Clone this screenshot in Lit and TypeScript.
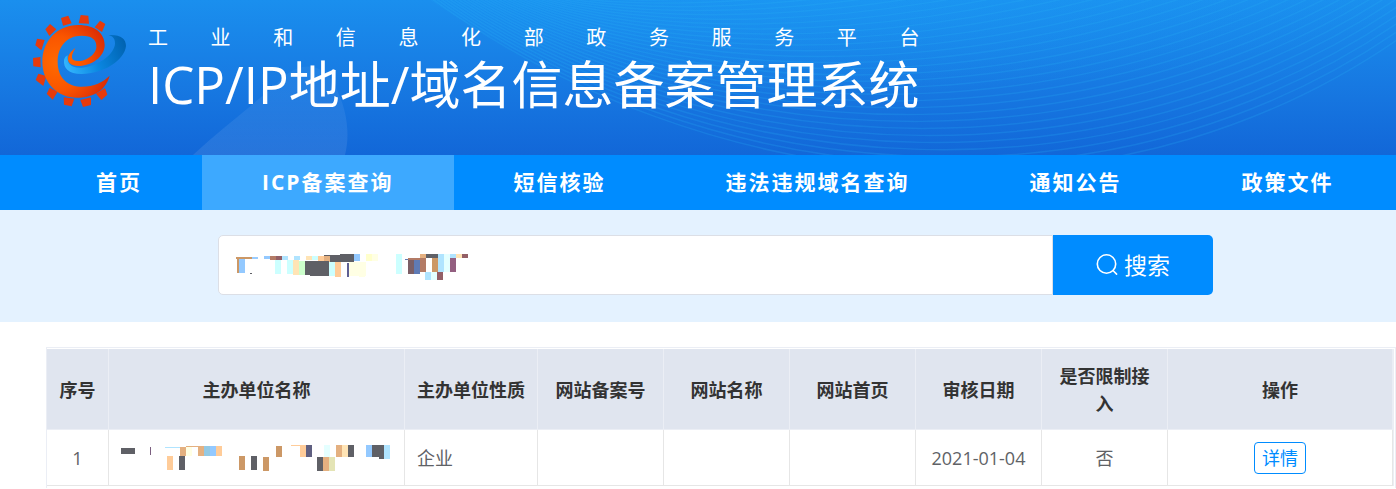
import { LitElement, html, svg, css } from "lit";
import { customElement } from "lit/decorators.js";

type Block = [number, number, number, number, string];

const QUERY_BLOCKS: Block[] = [
  [236, 257, 16, 2, "#cc9866"], [252, 257, 6, 2, "#99ccff"], [237, 259, 2, 14, "#cc9866"], [239, 259, 6, 14, "#93c9ff"],
  [250, 273, 2, 1, "#5f6066"], [264, 256, 6, 3, "#93c9ff"], [270, 256, 6, 4, "#b37b66"], [276, 256, 6, 4, "#935f66"],
  [282, 256, 6, 4, "#b0e4ff"], [294, 256, 6, 4, "#b0e4ff"], [306, 256, 6, 4, "#ffe4b5"], [312, 256, 6, 4, "#ccffff"],
  [318, 256, 6, 5, "#ffcc99"], [324, 256, 6, 6, "#e4b080"], [324, 255, 16, 1, "#5f6066"], [330, 256, 24, 6, "#5f6066"],
  [340, 254, 14, 2, "#5f6066"], [354, 254, 6, 7, "#93c9ff"], [366, 254, 6, 7, "#ffffcc"], [372, 254, 6, 7, "#ffffe4"],
  [275, 260, 6, 14, "#ccffff"], [287, 260, 6, 14, "#ccffff"], [293, 260, 6, 15, "#ffe4b5"], [299, 261, 6, 14, "#ccffcc"],
  [305, 261, 24, 14, "#5f6066"], [310, 275, 19, 1, "#5f6066"], [329, 262, 6, 14, "#ccffff"], [335, 262, 6, 15, "#ffcc99"],
  [347, 263, 2, 14, "#5f5f93"], [349, 262, 17, 14, "#ffffe4"], [359, 276, 6, 1, "#ffffe4"],
  [396, 254, 6, 20, "#ccffff"], [405, 259, 9, 1, "#5f7bb5"], [408, 260, 6, 14, "#7b5f66"], [414, 260, 6, 14, "#5f7bb5"],
  [408, 258, 18, 2, "#b37b66"], [420, 260, 6, 12, "#b37b66"], [420, 254, 6, 4, "#e4b080"], [426, 254, 12, 4, "#5f6066"],
  [432, 258, 6, 14, "#cc9866"], [438, 254, 6, 18, "#b0e4ff"], [444, 254, 6, 18, "#e4ffff"], [450, 254, 6, 4, "#b0e4ff"],
  [450, 258, 6, 14, "#935f80"], [456, 254, 6, 4, "#ffe4b5"], [462, 254, 6, 4, "#935f66"], [425, 272, 6, 8, "#b0e4ff"],
  [431, 272, 6, 8, "#e4ffff"], [437, 272, 6, 8, "#935f66"],
];

const NAME_BLOCKS: Block[] = [
  [121, 449, 14, 6, "#5f6066"], [150, 448, 1, 8, "#7b5f80"], [165, 448, 15, 1, "#b0e4ff"], [180, 448, 6, 9, "#e4b080"],
  [186, 447, 12, 1, "#e4b080"], [186, 448, 6, 9, "#ffffe4"], [198, 447, 6, 10, "#e4b080"], [204, 447, 6, 10, "#93c9e4"],
  [210, 447, 6, 10, "#93c9ff"], [216, 447, 6, 10, "#ffcc99"], [167, 457, 6, 14, "#ffcc99"], [179, 457, 6, 14, "#5f6066"],
  [239, 457, 6, 14, "#cc9866"], [251, 457, 6, 14, "#5f6066"], [263, 458, 6, 14, "#cc9866"], [276, 447, 6, 11, "#cc9866"],
  [291, 446, 9, 1, "#ffcc99"], [300, 446, 6, 12, "#ffcc99"], [306, 446, 6, 12, "#5f5f80"], [324, 446, 6, 12, "#e4ffff"],
  [336, 446, 6, 12, "#e4b080"], [342, 446, 6, 12, "#ffe4b5"], [348, 446, 6, 12, "#5f6066"], [366, 446, 6, 12, "#93c9ff"],
  [372, 446, 12, 12, "#5f6066"], [379, 458, 5, 2, "#5f6066"], [384, 446, 6, 14, "#b0e4ff"], [317, 458, 6, 14, "#5f6066"],
  [323, 458, 6, 14, "#e4b080"], [329, 458, 6, 14, "#e4e4b5"],
];

const mosaic = (blocks: Block[], x: number, y: number, w: number, h: number) => html`
  <svg width=${w} height=${h} viewBox="${x} ${y} ${w} ${h}" shape-rendering="crispEdges" aria-hidden="true">
    ${blocks.map(([bx, by, bw, bh, fill]) => svg`<rect x=${bx} y=${by} width=${bw} height=${bh} fill=${fill}></rect>`)}
  </svg>`;

@customElement("site-banner")
class SiteBanner extends LitElement {
  static styles = css`
    :host { display: block; }
    .banner {
      position: relative;
      overflow: hidden;
      height: 155px;
      box-sizing: border-box;
      padding: 15px 33px 0;
      display: flex;
      align-items: flex-start;
      gap: 21px;
      color: #fff;
      background: linear-gradient(#1a8fee, #1779e2 55%, #1267d8);
    }
    .waves { position: absolute; inset: 0; width: 100%; height: 100%; }
    .logo { position: relative; flex: none; }
    .names { position: relative; margin-top: 9px; }
    .org { margin: 0; font-size: 20px; line-height: 28px; font-weight: 400; text-align-last: justify; }
    .title { margin: 0; font-size: 51px; line-height: 64px; font-weight: 400; white-space: nowrap; }
  `;

  render() {
    const lines = Array.from({ length: 34 }, (_, i) => i);
    const teeth = [
      "183,54 205,47 215,70 189,77", "242,45 265,47 267,71 236,70", "300,62 316,72 306,96 284,82",
      "150,72 169,88 148,108 136,88", "111,116 134,120 124,151 106,136", "99,174 121,171 122,202 100,199",
      "115,221 139,228 130,258 107,240", "149,263 173,275 158,299 140,281", "191,292 223,296 215,319 192,314",
      "241,300 273,292 273,315 249,321", "288,281 315,264 322,284 304,300",
    ];
    return html`
      <header class="banner">
        <svg class="waves" viewBox="0 0 1396 155" preserveAspectRatio="none" aria-hidden="true">
          <defs>
            <radialGradient id="glow" cx="0.4" cy="0" r="0.6">
              <stop offset="0" stop-color="#1ca4fa" stop-opacity="0.35"></stop>
              <stop offset="1" stop-color="#1ca4fa" stop-opacity="0"></stop>
            </radialGradient>
            <linearGradient id="petal" x1="0" y1="0" x2="0" y2="1">
              <stop offset="0" stop-color="#fff" stop-opacity="0.04"></stop>
              <stop offset="1" stop-color="#fff" stop-opacity="0.09"></stop>
            </linearGradient>
          </defs>
          <path d="M430 0C620 125 800 160 1090 156C1240 145 1330 95 1396 48V0Z" fill="url(#glow)"></path>
          <path d="M193 155C225 125 260 100 286 75C305 60 325 66 334 84C348 110 350 135 345 155Z" fill="url(#petal)"></path>
          ${lines.map((i) => svg`<path fill="none" stroke="#2bb0f5" stroke-opacity="0.22" stroke-width="1.5"
            d="M${420 + 4 * i} ${-10}C700 ${200 - 6 * i} 1130 ${255 - 10 * i} 1440 ${8 - 8 * i}"></path>`)}
        </svg>
        <svg class="logo" width="94" height="92" viewBox="99 45 282 276" aria-hidden="true">
          <defs>
            <radialGradient id="orange" gradientUnits="userSpaceOnUse" cx="170" cy="190" r="165">
              <stop offset="0" stop-color="#ff6a00"></stop>
              <stop offset="0.5" stop-color="#fa5500"></stop>
              <stop offset="1" stop-color="#d92a06"></stop>
            </radialGradient>
            <linearGradient id="blue" gradientUnits="userSpaceOnUse" x1="190" y1="200" x2="378" y2="130">
              <stop offset="0" stop-color="#35b8ff"></stop>
              <stop offset="0.5" stop-color="#0a86e0"></stop>
              <stop offset="1" stop-color="#0062b0"></stop>
            </linearGradient>
          </defs>
          ${teeth.map((p) => svg`<polygon points=${p} fill="#e63a0c"></polygon>`)}
          <path fill="url(#blue)" d="M325 105C362 103 378 116 378 138C374 180 310 222 245 222C205 222 190 205 192 180C194 172 198 168 203 166C200 190 212 205 245 203C300 198 345 160 345 130C345 115 338 108 325 105Z"></path>
          <path fill="url(#orange)" d="M329 227C315 278 270 293 232 293C170 293 127 245 127 185C127 125 170 75 235 75C285 75 314 100 314 135C314 170 275 198 235 198C212 198 203 187 204 175C206 160 215 153 226 144C217 160 212 172 220 180C240 191 285 172 289 143C291 118 275 107 245 107C200 107 173 140 173 185C173 226 195 257 240 260C282 261 308 247 329 227Z"></path>
        </svg>
        <div class="names">
          <p class="org">工业和信息化部政务服务平台</p>
          <h1 class="title">ICP/IP地址/域名信息备案管理系统</h1>
        </div>
      </header>`;
  }
}

@customElement("site-nav")
class SiteNav extends LitElement {
  static styles = css`
    :host { display: block; }
    .nav { display: flex; padding-left: 36px; background: #008cff; }
    .link {
      padding: 0 60px;
      line-height: 55px;
      font-size: 21px;
      font-weight: 700;
      letter-spacing: 2px;
      color: #fff;
      text-decoration: none;
      white-space: nowrap;
    }
    .active { background: #3da9ff; }
  `;

  render() {
    const items = ["首页", "ICP备案查询", "短信核验", "违法违规域名查询", "通知公告", "政策文件"];
    return html`<nav class="nav">
      ${items.map((t, i) => html`<a class="link ${i === 1 ? "active" : ""}" href="#">${t}</a>`)}
    </nav>`;
  }
}

@customElement("search-bar")
class SearchBar extends LitElement {
  static styles = css`
    :host { display: block; }
    .band { display: flex; padding: 25px 183px 27px 218px; background: #e4f2ff; }
    .field { position: relative; flex: 1; display: flex; }
    .input {
      flex: 1;
      min-width: 0;
      height: 60px;
      box-sizing: border-box;
      padding: 0 18px;
      border: 1px solid #dcdfe6;
      border-radius: 5px 0 0 5px;
      background: #fff;
      font: inherit;
      font-size: 24px;
      color: #606266;
      outline: none;
    }
    .value { position: absolute; left: 18px; top: 18px; line-height: 0; pointer-events: none; }
    .button {
      width: 160px;
      height: 60px;
      display: flex;
      align-items: center;
      justify-content: center;
      gap: 6px;
      padding: 0;
      border: 0;
      border-radius: 0 5px 5px 0;
      background: #008cff;
      color: #fff;
      font: inherit;
      font-size: 23px;
      line-height: 32px;
    }
  `;

  render() {
    return html`<form class="band" role="search" @submit=${(e: Event) => e.preventDefault()}>
      <div class="field">
        <input class="input" type="text" aria-label="搜索" />
        <span class="value">${mosaic(QUERY_BLOCKS, 236, 253, 234, 28)}</span>
      </div>
      <button class="button" type="submit">
        <svg width="22" height="22" viewBox="0 0 22 22" fill="none" stroke="#fff" stroke-width="1.6" stroke-linecap="round" aria-hidden="true">
          <circle cx="10.5" cy="10" r="9.2"></circle>
          <path d="M17 16.5l3.6 3.6"></path>
        </svg>
        <span>搜索</span>
      </button>
    </form>`;
  }
}

@customElement("record-table")
class RecordTable extends LitElement {
  static styles = css`
    :host { display: block; }
    .frame { border: 1px solid #ebeef5; border-bottom: 0; padding: 1px 1px 0 0; min-height: 139px; }
    .table {
      width: 100%;
      table-layout: fixed;
      border-collapse: separate;
      border-spacing: 0;
      border-right: 1px solid #ebeef5;
      font-size: 18px;
      line-height: 28px;
      color: #606266;
    }
    .head {
      height: 78px;
      padding: 2px 12px 0;
      box-sizing: content-box;
      background: #e0e5ef;
      border-right: 1px solid #ebeef5;
      border-bottom: 1px solid #ebeef5;
      color: #333;
      font-weight: 700;
      text-align: center;
    }
    .cell {
      height: 55px;
      padding: 0 12px;
      border-right: 1px solid #e6e6e6;
      border-bottom: 1px solid #e6e6e6;
      font-weight: 400;
      text-align: center;
    }
    .start { text-align: left; }
    .mosaic { line-height: 0; }
    .index { width: 62px; }
    .name { width: 296px; }
    .kind { width: 133px; }
    .plain { width: 126px; }
    .action { width: 225px; }
    .detail {
      height: 32px;
      padding: 0 7px;
      border: 1px solid #008cff;
      border-radius: 4px;
      background: #fff;
      color: #008cff;
      font: inherit;
      line-height: 30px;
      vertical-align: middle;
    }
  `;

  render() {
    const heads = ["序号", "主办单位名称", "主办单位性质", "网站备案号", "网站名称", "网站首页", "审核日期", "是否限制接入", "操作"];
    const cols = ["index", "name", "kind", "plain", "plain", "plain", "plain", "plain", "action"];
    return html`<div class="frame">
      <table class="table">
        <colgroup>${cols.map((c) => html`<col class=${c} />`)}</colgroup>
        <thead><tr>${heads.map((h) => html`<th class="head" scope="col">${h}</th>`)}</tr></thead>
        <tbody>
          <tr>
            <td class="cell">1</td>
            <td class="cell start mosaic">${mosaic(NAME_BLOCKS, 121, 445, 270, 28)}</td>
            <td class="cell start">企业</td>
            <td class="cell"></td>
            <td class="cell"></td>
            <td class="cell"></td>
            <td class="cell">2021-01-04</td>
            <td class="cell">否</td>
            <td class="cell"><button class="detail" type="button">详情</button></td>
          </tr>
        </tbody>
      </table>
    </div>`;
  }
}

@customElement("app-root")
class AppRoot extends LitElement {
  static styles = css`
    :host {
      display: block;
      background: #fff;
      font-family: "Open Sans", "Noto Sans CJK SC", sans-serif;
    }
    .results { padding: 25px 0 0 46px; }
  `;

  render() {
    return html`
      <site-banner></site-banner>
      <site-nav></site-nav>
      <search-bar></search-bar>
      <main class="results"><record-table></record-table></main>`;
  }
}
